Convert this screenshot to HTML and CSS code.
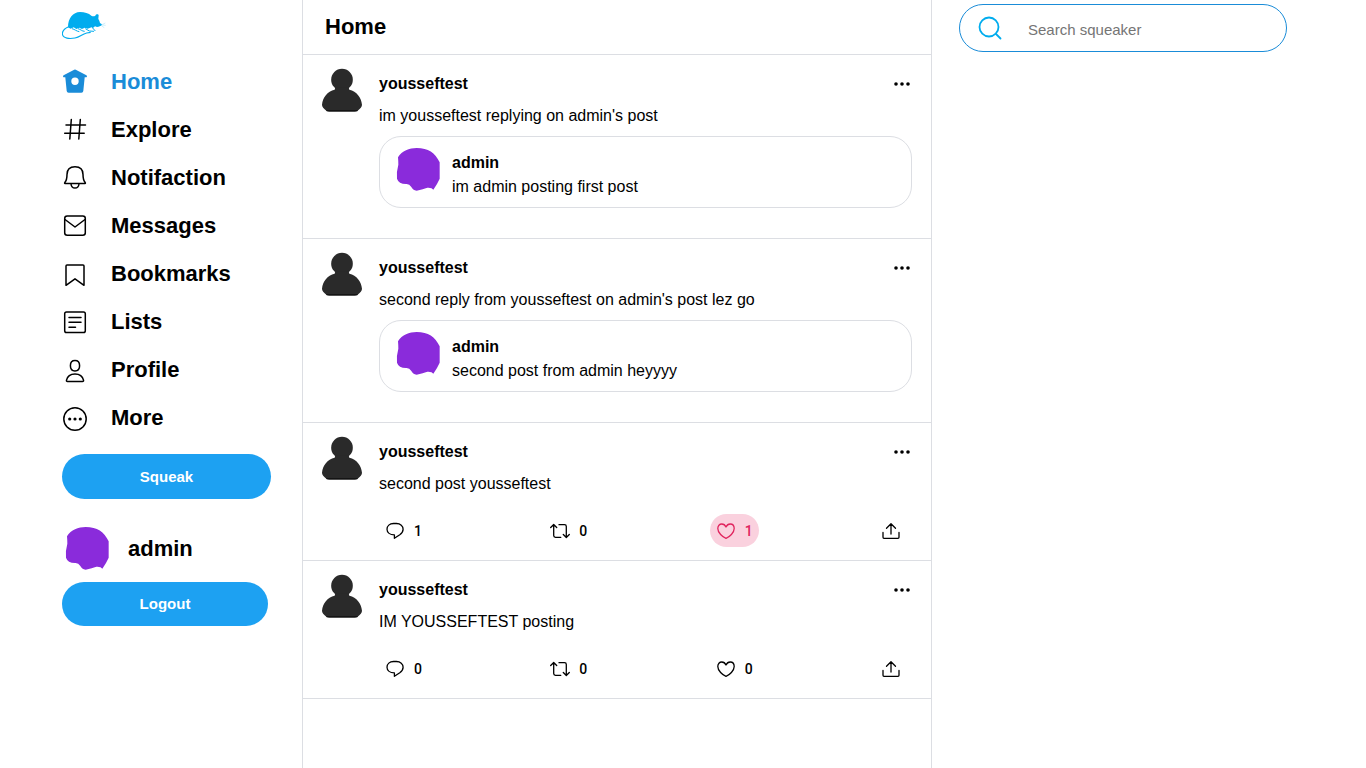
FILE: index.html
```html
<!DOCTYPE html>
<html lang="en">
<head>
<meta charset="utf-8">
<title>Home / Squeaker</title>
<link rel="stylesheet" href="styles.css">
</head>
<body>
<svg class="sprite" aria-hidden="true">
  <symbol id="blob" viewBox="48 51 135 135"><path fill="#8a2bdb" d="M54 82C66 62 88 54 110 54C145 54 165 68 179 97L179 146Q172 162 160 179Q156 172 142 173Q130 178 110 182Q98 180 94 171Q88 161 78 162Q56 162 51 146Q49 125 55 104Q55 92 54 82z"/></symbol>
  <symbol id="person" viewBox="63 54 126 135"><circle cx="126" cy="89" r="32.500" fill="#2a2a2a"/><path fill="#2a2a2a" d="M106 112h40l2 7C170 124 184 142 186 164q0 8-14 19-3 2-8 2H88q-5 0-8-2-14-11-14-19C68 142 82 124 104 119z"/><path stroke="#111" stroke-width="3" d="M79 182h94"/></symbol>
  <symbol id="dots" viewBox="0 0 20 20"><g fill="#000"><circle cx="4" cy="10" r="1.800"/><circle cx="10" cy="10" r="1.800"/><circle cx="16" cy="10" r="1.800"/></g></symbol>
  <symbol id="reply" viewBox="0 0 20 20"><path d="M8.500 2.500h3c3.900 0 6.600 2.500 6.600 5.700 0 2.500-1.500 4.200-3.300 5.500L9.400 17.300v-3.400C5 13.900 2 11.500 2 8.200c0-3.300 2.600-5.700 6.500-5.700z"/></symbol>
  <symbol id="repeat" viewBox="0 0 20 20"><path d="M.7 6.500 3.700 3.500l3 3M3.700 4v10.500c0 1 .8 1.800 1.800 1.800h5.300M9 3.700h5.500c1 0 1.800.8 1.800 1.800V16M13.300 13.500l3 3 3-3"/></symbol>
  <symbol id="heart" viewBox="0 0 20 20"><path d="M10 17.300C6.500 16 1.800 11.700 1.800 7.500c0-2.600 1.700-4.500 4-4.500C7.700 3 9.200 4.200 10 6c.8-1.800 2.300-3 4.200-3 2.300 0 4 1.900 4 4.500 0 4.200-4.700 8.500-8.200 9.800z"/></symbol>
  <symbol id="share" viewBox="0 0 20 20"><path d="M10 13V3M5.500 7.200 10 2.700l4.500 4.500M2 11.500v4.800c0 .6.400 1 1 1h14c.6 0 1-.4 1-1v-4.800"/></symbol>
</svg>

<div class="layout">
  <header class="sidebar">
    <a class="logo" href="#" aria-label="Squeaker">
      <svg viewBox="36 24 132 96" fill="#00acee"><path d="M54 82c0-28 15-45 36-46 14 0 26 4 34 11 5 3 8 2 12 0 2-5 9-6 10-1l-1 11c3 4 4 8 5 12 3 2 5 3 6 6-4 4-9 5-15 6l-6-2-7 6-3-3-12 4-9-3-8 4-8-4-9 4-8-5-9 4z"/><path fill="none" stroke="#00acee" stroke-width="3.500" d="M56 80c-12 5-19 12-19 22 2 14 22 15 38 12 15-3 20-11 35-15l12-2"/><path fill="none" stroke="#00acee" stroke-width="3" d="M66 86c8 2 14 8 22 9M84 86c8 2 12 8 20 8M106 86l12 7 14 1M128 84l8 9"/><path fill="none" stroke="#9cdff8" stroke-width="1.500" d="m156 74 10-5m-10 6 11 1m-12 2 8 5"/></svg>
    </a>
    <nav class="menu" aria-label="Main">
      <a class="menu-link active" href="#"><svg class="menu-icon" viewBox="0 0 26 26"><path fill="currentColor" stroke="none" fill-rule="evenodd" d="M12.200.7q.8-.4 1.600 0l10.600 5.600q.9.600.5 1.500-.3.600-1.200.5l-1-.1-1.400 13.800q-.2 1.700-1.900 1.700H6.600q-1.700 0-1.900-1.700L3.300 8.200l-1 .1q-.9.100-1.200-.5-.4-.9.500-1.500zM13 8.500a3.700 3.700 0 1 0 0 7.400 3.700 3.700 0 0 0 0-7.400z"/></svg>Home</a>
      <a class="menu-link" href="#"><svg class="menu-icon" viewBox="0 0 26 26"><path d="M9.300 2.500 7.800 22M18.300 2.500l-1.500 19.500M4 8h19.500M2.700 16.300h19.500"/></svg>Explore</a>
      <a class="menu-link" href="#"><svg class="menu-icon" viewBox="0 0 26 26"><path d="M3 18.500c-.5 0-.5-.4-.2-.9 2-2.300 2.200-5 2.200-8.100C5 4.500 8.200 1.700 13 1.700s8 2.800 8 7.800c0 3.100.2 5.800 2.200 8.100.3.500.3.900-.2.900zM9 19c.3 2.700 1.800 4 4 4s3.700-1.300 4-4"/></svg>Notifaction</a>
      <a class="menu-link" href="#"><svg class="menu-icon" viewBox="0 0 26 26"><rect x="2.700" y="3" width="20.600" height="19.300" rx="2.500"/><path d="m3 6.500 10 7.500 10-7.500"/></svg>Messages</a>
      <a class="menu-link" href="#"><svg class="menu-icon" viewBox="0 0 26 26"><path d="M4 24.300V5c0-.6.400-1 1-1h16c.6 0 1 .4 1 1v19.300l-9-6.500z"/></svg>Bookmarks</a>
      <a class="menu-link" href="#"><svg class="menu-icon" viewBox="0 0 26 26"><rect x="2.700" y="3" width="20.600" height="20.600" rx="1.800"/><path d="M7 8.500h12M7 13.300h12M7 18.300h6.500"/></svg>Lists</a>
      <a class="menu-link" href="#"><svg class="menu-icon" viewBox="0 0 26 26"><path d="M13 3.500c3 0 4.600 1.800 4.600 5.200s-1.800 5.200-4.600 5.200-4.600-1.800-4.600-5.200S10 3.500 13 3.500zM5.500 24.500c-.9 0-1.200-.5-1-1.400.8-3.600 4.100-6.200 8.500-6.200s7.700 2.600 8.500 6.200c.2.900-.1 1.400-1 1.400z"/></svg>Profile</a>
      <a class="menu-link" href="#"><svg class="menu-icon" viewBox="0 0 26 26"><circle cx="13" cy="14" r="11.200"/><g fill="currentColor" stroke="none"><circle cx="7.700" cy="14" r="1.600"/><circle cx="13" cy="14" r="1.600"/><circle cx="18.300" cy="14" r="1.600"/></g></svg>More</a>
    </nav>
    <button class="button squeak" type="button">Squeak</button>
    <a class="account" href="#"><svg class="blob"><use href="#blob"/></svg>admin</a>
    <button class="button logout" type="button">Logout</button>
  </header>

  <main class="feed">
    <h1 class="feed-title">Home</h1>

    <article class="post">
      <svg class="avatar"><use href="#person"/></svg>
      <div class="post-main">
        <div class="post-head"><a class="name" href="#">yousseftest</a><button class="options" type="button" aria-label="Options"><svg class="icon"><use href="#dots"/></svg></button></div>
        <p class="post-text">im yousseftest replying on admin's post</p>
        <blockquote class="quote">
          <svg class="blob"><use href="#blob"/></svg>
          <div><a class="name" href="#">admin</a><p class="quote-text">im admin posting first post</p></div>
        </blockquote>
      </div>
    </article>

    <article class="post">
      <svg class="avatar"><use href="#person"/></svg>
      <div class="post-main">
        <div class="post-head"><a class="name" href="#">yousseftest</a><button class="options" type="button" aria-label="Options"><svg class="icon"><use href="#dots"/></svg></button></div>
        <p class="post-text">second reply from yousseftest on admin's post lez go</p>
        <blockquote class="quote">
          <svg class="blob"><use href="#blob"/></svg>
          <div><a class="name" href="#">admin</a><p class="quote-text">second post from admin heyyyy</p></div>
        </blockquote>
      </div>
    </article>

    <article class="post">
      <svg class="avatar"><use href="#person"/></svg>
      <div class="post-main">
        <div class="post-head"><a class="name" href="#">yousseftest</a><button class="options" type="button" aria-label="Options"><svg class="icon"><use href="#dots"/></svg></button></div>
        <p class="post-text">second post yousseftest</p>
        <div class="actions">
          <button class="action" type="button" aria-label="Reply, 1"><svg class="icon"><use href="#reply"/></svg><span>1</span></button>
          <button class="action" type="button" aria-label="Resqueak, 0"><svg class="icon"><use href="#repeat"/></svg><span>0</span></button>
          <button class="action liked" type="button" aria-label="Like, 1" aria-pressed="true"><svg class="icon"><use href="#heart"/></svg><span>1</span></button>
          <button class="action" type="button" aria-label="Share"><svg class="icon"><use href="#share"/></svg></button>
        </div>
      </div>
    </article>

    <article class="post">
      <svg class="avatar"><use href="#person"/></svg>
      <div class="post-main">
        <div class="post-head"><a class="name" href="#">yousseftest</a><button class="options" type="button" aria-label="Options"><svg class="icon"><use href="#dots"/></svg></button></div>
        <p class="post-text">IM YOUSSEFTEST posting</p>
        <div class="actions">
          <button class="action" type="button" aria-label="Reply, 0"><svg class="icon"><use href="#reply"/></svg><span>0</span></button>
          <button class="action" type="button" aria-label="Resqueak, 0"><svg class="icon"><use href="#repeat"/></svg><span>0</span></button>
          <button class="action" type="button" aria-label="Like, 0" aria-pressed="false"><svg class="icon"><use href="#heart"/></svg><span>0</span></button>
          <button class="action" type="button" aria-label="Share"><svg class="icon"><use href="#share"/></svg></button>
        </div>
      </div>
    </article>
  </main>

  <aside class="extras">
    <form class="search" role="search">
      <label class="search-label" for="search" aria-label="Search"><svg viewBox="0 0 24 24"><circle cx="11" cy="11" r="9.500"/><path d="m18 18 4.500 4.500"/></svg></label>
      <input class="search-input" id="search" type="search" placeholder="Search squeaker">
    </form>
  </aside>
</div>
</body>
</html>
```
FILE: styles.css
```css
* { box-sizing: border-box; }

body {
  margin: 0;
  background: #fff;
  color: #000;
  font-family: "Liberation Sans", Arial, sans-serif;
  font-size: 16px;
  line-height: 24px;
}

a { color: inherit; text-decoration: none; }
p, h1, blockquote { margin: 0; }
svg { display: block; flex: none; }
button { border: 0; background: none; font: inherit; color: inherit; cursor: pointer; }
.sprite { position: absolute; width: 0; height: 0; }

.layout {
  display: grid;
  grid-template-columns: 302fr 630fr 434fr;
  min-height: 100vh;
}

/* Sidebar */
.sidebar {
  display: flex;
  flex-direction: column;
  padding: 8px 31px 24px 62px;
}
.logo { margin-bottom: 18px; }
.logo svg { width: 44px; height: 32px; }
.menu { display: flex; flex-direction: column; margin-bottom: 12px; }
.menu-link {
  display: flex;
  align-items: center;
  gap: 23px;
  height: 48px;
  font-size: 22px;
  font-weight: bold;
}
.menu-link.active { color: #1a8cd8; }
.menu-icon {
  width: 26px;
  height: 26px;
  fill: none;
  stroke: currentColor;
  stroke-width: 1.5px;
  stroke-linecap: round;
  stroke-linejoin: round;
}
.button {
  height: 45px;
  border-radius: 24px;
  background: #1da1f2;
  color: #fff;
  font-size: 15px;
  font-weight: bold;
}
.account {
  display: flex;
  align-items: center;
  gap: 18px;
  margin: 27px 0 11px;
  padding-left: 3px;
  font-size: 22px;
  font-weight: bold;
}
.logout { height: 44px; margin-right: 3px; }
.blob { width: 45px; height: 45px; }

/* Feed */
.feed { border: solid #dcdee3; border-width: 0 1px; }
.feed-title {
  padding: 15px 22px;
  border-bottom: 1px solid #dcdee3;
  font-size: 22px;
  line-height: 24px;
}
.post {
  display: flex;
  gap: 16px;
  padding: 13px 19px 13px 18px;
  border-bottom: 1px solid #dcdee3;
}
.avatar { width: 42px; height: 45px; }
.post-main { flex: 1; min-width: 0; padding-top: 4px; }
.post-head { display: flex; justify-content: space-between; align-items: center; }
.name { font-weight: bold; }
.options { padding: 2px 0; }
.icon { width: 20px; height: 20px; }
.post-text { margin-top: 8px; }
.quote {
  display: flex;
  gap: 11px;
  margin: 8px 0 17px;
  padding: 10px 16px 8px;
  border: 1px solid #dcdee3;
  border-radius: 22px;
}
.quote > div { padding-top: 4px; }
.actions {
  display: flex;
  justify-content: space-between;
  margin-top: 18px;
  padding-right: 5px;
}
.action {
  display: flex;
  align-items: center;
  gap: 9px;
  height: 33px;
  padding: 0 6px;
  border-radius: 17px;
  font-family: Roboto, "Liberation Sans", sans-serif;
  font-size: 14px;
  font-weight: 500;
}
.action .icon {
  fill: none;
  stroke: currentColor;
  stroke-width: 1.3px;
  stroke-linecap: round;
  stroke-linejoin: round;
}
.liked { background: #fad1de; color: #e0245e; }

/* Search */
.extras { padding: 4px 79px 0 27px; }
.search {
  display: flex;
  align-items: center;
  gap: 25px;
  height: 48px;
  padding: 0 24px 0 18px;
  border: 1px solid #1a8cd8;
  border-radius: 24px;
}
.search-label svg {
  width: 24px;
  height: 24px;
  fill: none;
  stroke: #00acee;
  stroke-width: 1.8px;
  stroke-linecap: round;
}
.search-input {
  flex: 1;
  min-width: 0;
  padding: 3px 1px 1px;
  border: 0;
  outline: 0;
  background: none;
  font-family: inherit;
  font-size: 15px;
}
.search-input::placeholder { color: #757575; }
```
